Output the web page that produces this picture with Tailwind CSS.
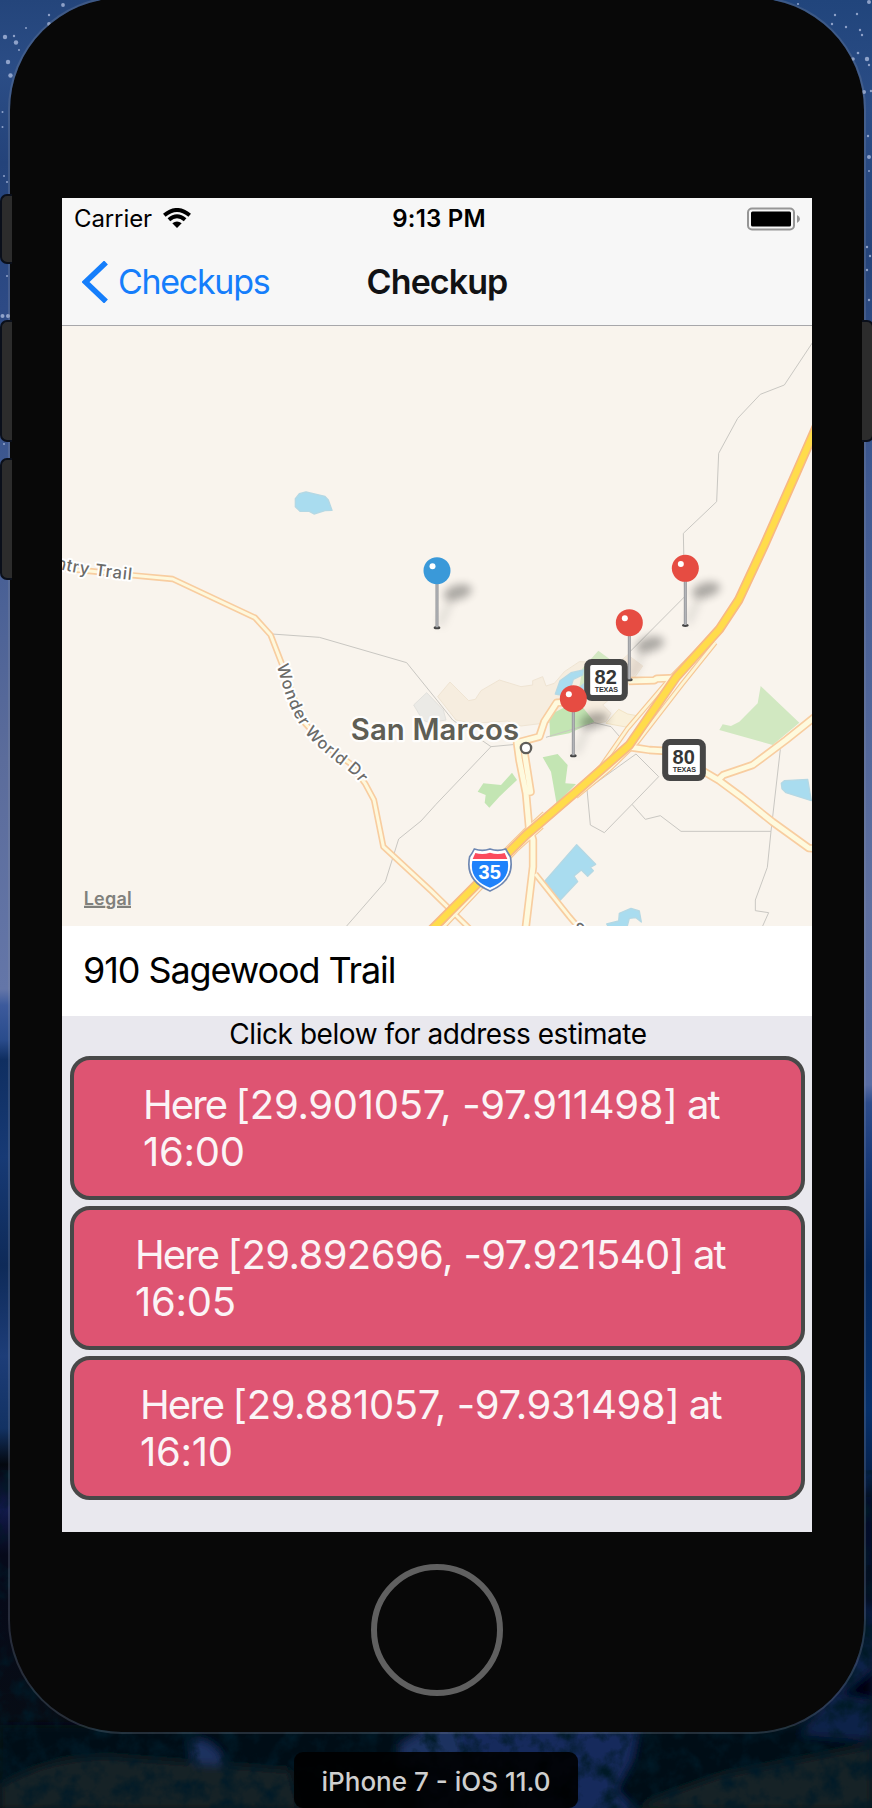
<!DOCTYPE html>
<html lang="en">
<head>
<meta charset="utf-8">
<title>iPhone 7 - iOS 11.0</title>
<script src="https://cdn.jsdelivr.net/npm/@tailwindcss/browser@4"></script>
</head>
<body class="font-[Inter,sans-serif]">
<div class="relative w-[872px] h-[1808px] overflow-hidden bg-[#020810]">
  <!-- Desktop wallpaper -->
  <svg class="absolute inset-0" width="872" height="1808" viewBox="0 0 872 1808">
    <defs>
      <linearGradient id="left" x1="0" y1="0" x2="0" y2="1808" gradientUnits="userSpaceOnUse">
        <stop offset="0" stop-color="#24457b"/><stop offset=".04" stop-color="#2b4d86"/><stop offset=".09" stop-color="#24437a"/><stop offset=".17" stop-color="#2d4a85"/><stop offset=".27" stop-color="#405a92"/>
        <stop offset=".42" stop-color="#5b6c9b"/><stop offset=".547" stop-color="#6476a8"/><stop offset=".556" stop-color="#3c5a9c"/><stop offset=".575" stop-color="#2a4c8c"/><stop offset=".586" stop-color="#0f2e60"/>
        <stop offset=".64" stop-color="#173a75"/><stop offset=".7" stop-color="#0e2a58"/><stop offset=".75" stop-color="#1d3d78"/><stop offset=".79" stop-color="#123263"/><stop offset=".81" stop-color="#04080f"/><stop offset=".835" stop-color="#11194a"/><stop offset=".86" stop-color="#06091a"/><stop offset="1" stop-color="#070e12"/>
      </linearGradient>
      <linearGradient id="right" x1="0" y1="0" x2="0" y2="1808" gradientUnits="userSpaceOnUse">
        <stop offset="0" stop-color="#21457c"/><stop offset=".06" stop-color="#2b4d86"/><stop offset=".14" stop-color="#25447a"/><stop offset=".27" stop-color="#405a92"/><stop offset=".5" stop-color="#5f70a0"/>
        <stop offset=".6" stop-color="#596da4"/><stop offset=".61" stop-color="#2e4d8c"/><stop offset=".64" stop-color="#1b3c7b"/><stop offset=".7" stop-color="#04265a"/><stop offset=".78" stop-color="#06306a"/><stop offset=".82" stop-color="#061f48"/><stop offset=".9" stop-color="#07193c"/><stop offset="1" stop-color="#0a1210"/>
      </linearGradient>
      <filter id="grain" x="0" y="0" width="100%" height="100%">
        <feTurbulence type="fractalNoise" baseFrequency=".05" numOctaves="6" seed="4"/>
        <feColorMatrix values="0 0 0 0 0  0 0 0 0 .01  0 0 0 0 .02  2.4 0 0 0 -1"/>
      </filter>
      <filter id="soft"><feGaussianBlur stdDeviation="5"/></filter>
    </defs>
    <rect width="436" height="1808" fill="url(#left)"/>
    <rect x="436" width="436" height="1808" fill="url(#right)"/>
    <g filter="url(#soft)">
      <path d="M0 1725H872V1808H0Z" fill="#050b13"/>
      <path d="M425 1720H640L632 1760 615 1790 640 1815H420Z" fill="#182c5c"/>
      <path d="M190 1740Q215 1738 225 1765L215 1795 195 1770ZM400 1745L425 1730H460V1765H400Z" fill="#1b3160"/>
      <path d="M0 1785Q60 1750 130 1758L290 1770 300 1810H0ZM650 1800L720 1775 872 1745V1810H640Z" fill="#122225"/>
      <path d="M872 1625L835 1690 800 1735 872 1740Z" fill="#0d2048"/>
      <path d="M872 1480L864 1500 866 1600 872 1610ZM872 1670L840 1695 872 1700Z" fill="#01040a"/>
    </g>
    <rect y="1470" width="872" height="338" filter="url(#grain)"/>
    <g fill="#a9b9dc" opacity=".8">
      <circle cx="5" cy="37" r="2.2"/><circle cx="16" cy="42.500" r="2.200"/><circle cx="8" cy="62" r="2.200"/><circle cx="10.500" cy="75.500" r="2.200"/><circle cx="63" cy="5" r="1.900"/><circle cx="49" cy="15" r="1.200"/><circle cx="14" cy="36" r="1.200"/><circle cx="26" cy="28" r="1"/><circle cx="49" cy="24" r="1.900"/><circle cx="19" cy="50" r="1"/><circle cx="2.500" cy="112" r="1"/><circle cx="2.500" cy="127" r="1"/><circle cx="4" cy="176" r="1"/><circle cx="7" cy="182" r="1"/><circle cx="2.500" cy="316" r="2"/><circle cx="8" cy="316" r="2"/><circle cx="7" cy="276" r="1"/><circle cx="4" cy="444" r="1"/>
      <circle cx="798" cy="4" r="1.100"/><circle cx="869" cy="2" r="2"/><circle cx="835" cy="15" r="1.200"/><circle cx="857" cy="14" r="1.200"/><circle cx="832" cy="24" r="1.200"/><circle cx="846" cy="27" r="1.200"/><circle cx="860" cy="30" r="1.200"/><circle cx="862" cy="35" r="1.200"/><circle cx="858" cy="53" r="1.300"/><circle cx="867" cy="59" r="2.200"/><circle cx="869" cy="65" r="1.200"/><circle cx="853" cy="59" r="1.800"/><circle cx="864" cy="92" r="2"/><circle cx="871" cy="91" r="1.200"/><circle cx="868" cy="136" r="1.200"/><circle cx="869" cy="157" r="2"/><circle cx="869" cy="171" r="1"/><circle cx="867" cy="247" r="1.200"/><circle cx="870" cy="256" r="1.200"/><circle cx="867" cy="270" r="1.200"/><circle cx="869" cy="300" r="1.200"/>
    </g>
  </svg>

  <!-- Phone body with its outer rim -->
  <div class="absolute left-[8px] top-[-4px] w-[858px] h-[1738px] rounded-[114px] border-2 border-[#8a93a5]/25 bg-[#080808] bg-clip-padding"></div>
  <!-- Side buttons -->
  <div class="absolute left-0 top-[194px] w-3 h-[70px] rounded-l-[7px] border-2 border-r-0 border-[#0a0f1a] bg-[#2c2c2c]"></div>
  <div class="absolute left-0 top-[320px] w-3 h-[122px] rounded-l-[7px] border-2 border-r-0 border-[#0a0f1a] bg-[#2c2c2c]"></div>
  <div class="absolute left-0 top-[458px] w-3 h-[122px] rounded-l-[7px] border-2 border-r-0 border-[#0a0f1a] bg-[#2c2c2c]"></div>
  <div class="absolute left-[862px] top-[320px] w-3 h-[122px] rounded-r-[7px] border-2 border-l-0 border-[#0a0f1a] bg-[#2c2c2c]"></div>

  <div class="relative flex flex-col items-center pt-[198px] pr-[-2px] w-[874px]">
    <main class="flex flex-col w-[750px] h-[1334px] overflow-hidden bg-[#e9e8ee]">
      <header class="flex flex-col h-[128px] shrink-0 border-b border-[#a7a7aa] bg-[#f7f7f7]">
        <div class="grid grid-cols-3 items-center h-10 pl-3 pr-[11px] pt-[2px] text-[24px] leading-none text-black">
          <div class="flex items-center gap-[11px]">
            <span class="tracking-[-0.1px]">Carrier</span>
            <svg width="28" height="20" viewBox="0 0 28 20" class="-mt-[3px]">
              <path d="M14 20L9.300 15.300Q14 11.800 18.700 15.300Z" fill="#000"/>
              <path d="M5.900 11.700Q14 4.800 22.100 11.700" fill="none" stroke="#000" stroke-width="4"/>
              <path d="M1.300 7.200Q14-3.200 26.700 7.200" fill="none" stroke="#000" stroke-width="4"/>
            </svg>
          </div>
          <span class="pl-[3px] text-center font-semibold tracking-[0.2px]">9:13 PM</span>
          <svg width="54" height="24" viewBox="0 0 54 24" class="justify-self-end">
            <rect x="1" y="1.500" width="46" height="21" rx="4" fill="none" stroke="#969696" stroke-width="2"/>
            <rect x="4" y="4.500" width="40" height="15" rx="1.500" fill="#000"/>
            <path d="M50 8Q53 9.500 53 12T50 16Z" fill="#969696"/>
          </svg>
        </div>
        <div class="grid grid-cols-[1fr_auto_1fr] items-center h-[87px] pl-[20px] pr-[20px] text-[34px] leading-none">
          <div class="flex items-center gap-[10px] text-[#157efb]">
            <svg width="26" height="42" viewBox="0 0 26 42"><path d="M24 1.500L3.500 21 24 40.500" fill="none" stroke="#157efb" stroke-width="5.500"/></svg>
            <span class="tracking-[-1.3px]">Checkups</span>
          </div>
          <h1 class="font-semibold tracking-[-0.9px] text-[#111214]">Checkup</h1>
          <span></span>
        </div>
      </header>

      <!-- Map -->
      <svg class="block shrink-0" width="750" height="600" viewBox="-1122 -882 2250 1800" font-family="Inter, sans-serif">
        <defs>
          <filter id="blur" x="-60%" y="-100%" width="220%" height="300%"><feGaussianBlur stdDeviation="12"/></filter>
          <linearGradient id="stem"><stop offset="0" stop-color="#8b8c90"/><stop offset=".5" stop-color="#b6b8bc"/><stop offset="1" stop-color="#8b8c90"/></linearGradient>
          <g id="pin">
            <ellipse cx="62" cy="65" rx="43" ry="22" fill="#000" opacity=".31" transform="rotate(-15 62 65)" filter="url(#blur)"/>
            <path d="M8 165L45 80" stroke="#000" stroke-opacity=".13" stroke-width="16" filter="url(#blur)"/>
            <ellipse cx="0" cy="171" rx="10" ry="5" fill="#444"/>
            <rect x="-4.500" y="34" width="9" height="136" fill="url(#stem)"/>
            <circle r="40.500"/><circle cx="-13.500" cy="-13" r="9" fill="#fff"/>
          </g>
          <g id="local" fill="none" stroke-linejoin="round">
            <path d="M-1128-156L-1040-147-910-134-790-123-543-7-496 45-463 130-428 230-393 310-328 380-258 430-213 490-186 540-158 680-12 815 100 925"/>
            <path d="M298 762L400 890 430 925"/>
          </g>
          <g id="frontage" fill="none" stroke-linejoin="round">
            <path d="M832 42L710 167 575 325 495 440 415 515M838 68L740 190 605 365 520 448 420 530M325 580L265 635 205 695M318 620L240 690 25 918"/>
          </g>
          <g id="major" fill="none" stroke-linejoin="round">
            <path d="M412 246L362 248 325 305 310 350 243 368 250 420 270 520 279 620 291 660 291 740 269 925M265 395L284 516 266 518M578 183L655 181 662 176 718 174M570 380L600 384 640 390 690 393 745 420 850 482 915 530 1010 606 1118 684 1135 686M848 478L862 465 950 435 1050 360 1135 292"/>
          </g>
          <path id="freeway" d="M1150-600L1080-440 985-225 908-60 850 28 720 172 580 375 415 520 270 645 215 700 8 908-30 946" fill="none" stroke-linejoin="round"/>
        </defs>
        <rect x="-1122" y="-882" width="2250" height="1800" fill="#f9f4ed"/>

        <g stroke-width="3" stroke-linejoin="round">
          <path d="M5 230L42 186 98 242 118 238 135 212 190 180 255 200 290 195 290 182 320 170 330 198 355 190 385 155 430 125 545 130 575 105 620 138 590 180 500 255 525 280 510 305 480 310 400 300 255 318 215 303 110 310 60 300Z" fill="#f6eddf" stroke="#efe4d3"/>
          <path d="M510 310L548 268 575 282 608 288 575 322Z" fill="#f9f0da" stroke="#f2e4c6"/>
          <path d="M545 135L578 105 620 138 578 185Z" fill="#f1e6d9"/>
          <path d="M-67 255L-28 218 22 270 30 300-20 308-40 300Z" fill="#ebeae6" stroke="#e2e1dd"/>
          <path d="M440 145L487 92 525 120 520 200 430 200Z" fill="#d3e8c2"/>
          <path d="M340 285L400 255 440 262 475 305 400 340 342 351Z" fill="#c3e5b3"/>
          <path d="M320 412L365 402 395 435 388 490 420 492 362 552 345 455Z" fill="#c3e5b3"/>
          <path d="M125 515L142 490 195 495 228 458 243 480 190 530 160 563 146 548 149 525Z" fill="#c3e5b3"/>
          <path d="M850 330L860 313 885 318 910 305 965 250 974 198 1090 308 1010 375Z" fill="#d1e8c1"/>
        </g>
        <g fill="#a9dcef" stroke="#b4d8e4" stroke-width="4" stroke-linejoin="round">
          <path d="M-422-364L-410-379-390-384-333-371-323-360-312-329-333-328-366-318-380-326-408-326-422-340Z"/>
          <path d="M358 222L372 182 405 158 442 150 440 165 412 178 405 200 375 225ZM418 213L443 192V210Z"/>
          <path d="M422 674L479 733 463 742 472 752 455 769 436 750 414 768 425 785 373 840 327 783Z"/>
          <path d="M1036 490L1045 482 1115 478 1126 542 1050 518 1038 506Z"/>
          <path d="M512 912L548 903 550 880 585 865 610 873 616 906 600 893 580 895 572 925H520Z"/>
        </g>
        <path d="M-492 42L-350 52-88 128 0 237 50 300 165 380 240 373M330 352L475 308 525 320 556 356M165 380L0 553-45 603-112 657-152 785-268 918M1130-833L1045-705 973-677 905-605 848-500 842-355 742-260 746-70 580 97M600 402L668 470 588 553 628 598 673 587 735 634H1005M600 402L453 508 463 615 505 638 588 553M1033 388L1005 634 994 742 958 840V872L998 878 980 918" fill="none" stroke="#c9c7c2" stroke-width="3"/>

        <use href="#local" stroke="#f8cda0" stroke-width="19"/><use href="#frontage" stroke="#f6c795" stroke-width="15"/>
        <use href="#major" stroke="#f8cda0" stroke-width="25"/>
        <use href="#local" stroke="#fef8dc" stroke-width="9"/><use href="#frontage" stroke="#fdf5d6" stroke-width="8"/>
        <use href="#major" stroke="#fefade" stroke-width="15"/>
        <use href="#freeway" stroke="#f8b983" stroke-width="29"/><use href="#freeway" stroke="#ffdc4b" stroke-width="19"/>

        <g fill="#6b6b69" stroke="#fff" stroke-width="12" stroke-linejoin="round" paint-order="stroke" font-size="50" font-weight="500">
          <path id="trail" d="M-1250-205Q-1160-155-1080-142T-890-118" fill="none" stroke="none"/>
          <text><textPath href="#trail" startOffset="14" textLength="336">Country Trail</textPath></text>
          <path id="wondertext" d="M-478 136C-450 240-428 285-400 328S-300 425-272 446S-240 472-226 492" fill="none" stroke="none"/>
          <text font-size="49"><textPath href="#wondertext" startOffset="0" textLength="445">Wonder World Dr</textPath></text>
          <text transform="translate(403 925) rotate(50)">S</text>
        </g>
        <text x="-256" y="359" textLength="505" font-size="88" font-weight="600" fill="#5f5e55" stroke="#fff" stroke-opacity=".9" stroke-width="14" paint-order="stroke" stroke-linejoin="round">San Marcos</text>
        <circle cx="270" cy="384" r="15.500" fill="#fff" stroke="#5f5e5a" stroke-width="7"/>

        <g text-anchor="middle" font-family="'Liberation Sans', sans-serif" font-weight="700" fill="#363636">
          <rect x="453.500" y="126" width="113" height="108" rx="14" fill="#fff" stroke="#464646" stroke-width="18"/>
          <text x="509" y="192" font-size="60">82</text><text x="511" y="216" font-size="21.500" textLength="70">TEXAS</text>
          <rect x="687.500" y="366" width="113" height="108" rx="14" fill="#fff" stroke="#464646" stroke-width="18"/>
          <text x="743" y="432" font-size="60">80</text><text x="745" y="456" font-size="21.500" textLength="70">TEXAS</text>
          <path d="M115 687Q139 695 162 687 185 695 209 687 217 701 223 710 238 781 162 813 86 781 101 710 108 701 115 687Z" fill="#fff" stroke="#6e87b2" stroke-width="5"/>
          <path d="M118 699Q140 705 162 698 184 705 206 699L214 717H110Z" fill="#fb4b5d"/>
          <path d="M109 723H215Q225 780 162 803 99 780 109 723Z" fill="#1f82fb"/>
          <text x="161" y="777" font-size="60" fill="#fff">35</text>
        </g>
        <use href="#pin" x="3" y="-148" fill="#3a99d9"/>
        <use href="#pin" x="748" y="-155" fill="#e64c42"/>
        <use href="#pin" x="580" y="8" fill="#e64c42"/>
        <use href="#pin" x="412" y="236" fill="#e64c42"/>
        <g fill="#80807c"><text x="-1057" y="855" font-size="54" font-weight="600" textLength="144">Legal</text><path d="M-1056 857h64v7h-64zM-957 857h42v7h-42zM-986 857h8v7h-8z"/></g>
      </svg>

      <div class="flex items-center h-[90px] shrink-0 pl-[21px] pb-[3px] bg-white text-[36px] leading-none tracking-[-1.1px] text-black">910 Sagewood Trail</div>
      <p class="flex items-center justify-center h-10 shrink-0 pb-[5px] pl-[2px] text-[28px] leading-none tracking-[-0.45px] text-black">Click below for address estimate</p>
      <div class="flex flex-col gap-[6px] pl-2 pr-[7px] text-[40px] leading-[47px] text-[#fbf4f6]">
        <div class="flex flex-col justify-center h-[144px] rounded-[20px] border-4 border-[#484848] bg-[#de5472] pl-[69px] whitespace-nowrap"><p class="tracking-[-0.3px]"><span class="tracking-[-1.9px]">Here </span>[29.901057, -97.911498]<span class="tracking-[-1.9px]"> at</span></p><p class="tracking-[-0.3px]">16:00</p></div>
        <div class="flex flex-col justify-center h-[144px] rounded-[20px] border-4 border-[#484848] bg-[#de5472] pl-[61px] whitespace-nowrap"><p class="tracking-[-0.6px]"><span class="tracking-[-1.9px]">Here </span>[29.892696, -97.921540]<span class="tracking-[-1.9px]"> at</span></p><p class="tracking-[-0.3px]">16:05</p></div>
        <div class="flex flex-col justify-center h-[144px] rounded-[20px] border-4 border-[#484848] bg-[#de5472] pl-[66px] whitespace-nowrap"><p class="tracking-[-0.4px]"><span class="tracking-[-1.9px]">Here </span>[29.881057, -97.931498]<span class="tracking-[-1.9px]"> at</span></p><p class="tracking-[-0.3px]">16:10</p></div>
      </div>
    </main>
    <div class="mt-8 size-[132px] rounded-full border-[6px] border-[#606060]"></div>
    <div class="mt-[56px] mr-[2px] flex items-center justify-center w-[284px] h-[56px] rounded-[9px] bg-black/90 pt-[3px] text-[26px] leading-none font-medium text-[#cfcfcf]">iPhone 7 - iOS 11.0</div>
  </div>
</div>
</body>
</html>
